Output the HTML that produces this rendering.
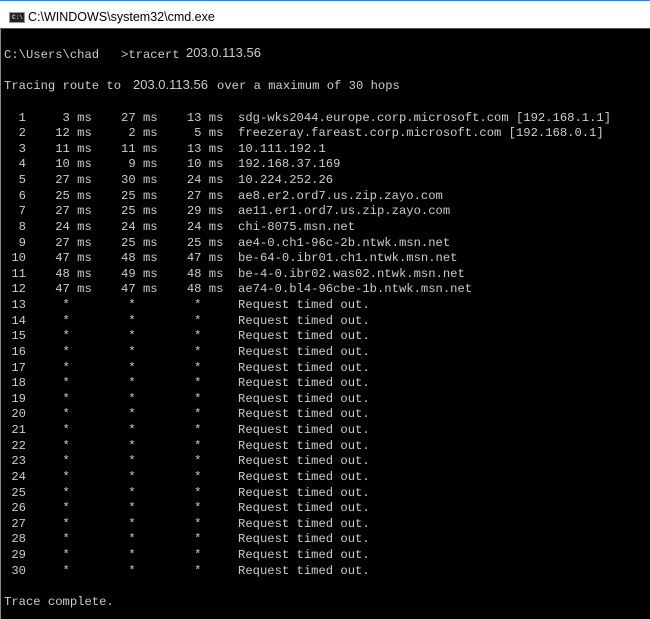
<!DOCTYPE html>
<html><head><meta charset="utf-8"><style>
html,body{margin:0;padding:0;width:650px;height:619px;overflow:hidden;background:#000;}
#title{position:absolute;left:0;top:0;width:650px;height:29px;background:#fff;border-top:1px solid #3a7bd5;box-sizing:border-box;border-bottom:1px solid #555;}
#title .t{position:absolute;left:28px;top:9px;font:12.5px "Liberation Sans",sans-serif;color:#000;}
#icon{position:absolute;left:9px;top:11px;width:16px;height:11px;background:#222;border:1px solid #999;box-sizing:border-box;}
#icon span{position:absolute;left:2px;top:1px;font:bold 6px "Liberation Mono",monospace;color:#ccc;line-height:7px;}
#con{position:absolute;left:0;top:29px;width:650px;height:590px;background:#000;border-left:1px solid #888;box-sizing:border-box;}
pre{position:absolute;left:3px;top:19px;margin:0;font:12.2px/15.62px "Liberation Mono",monospace;color:#cccccc;white-space:pre;}
.ip{position:absolute;font:13px "Liberation Sans",sans-serif;color:#cccccc;}
</style></head><body>
<div id="title"><div id="icon"><span>C:\</span></div><div class="t">C:\WINDOWS\system32\cmd.exe</div></div>
<div id="con">
<pre>C:\Users\chad   &gt;tracert

Tracing route to

  1     3 ms    27 ms    13 ms  sdg-wks2044.europe.corp.microsoft.com [192.168.1.1]
  2    12 ms     2 ms     5 ms  freezeray.fareast.corp.microsoft.com [192.168.0.1]
  3    11 ms    11 ms    13 ms  10.111.192.1
  4    10 ms     9 ms    10 ms  192.168.37.169
  5    27 ms    30 ms    24 ms  10.224.252.26
  6    25 ms    25 ms    27 ms  ae8.er2.ord7.us.zip.zayo.com
  7    27 ms    25 ms    29 ms  ae11.er1.ord7.us.zip.zayo.com
  8    24 ms    24 ms    24 ms  chi-8075.msn.net
  9    27 ms    25 ms    25 ms  ae4-0.ch1-96c-2b.ntwk.msn.net
 10    47 ms    48 ms    47 ms  be-64-0.ibr01.ch1.ntwk.msn.net
 11    48 ms    49 ms    48 ms  be-4-0.ibr02.was02.ntwk.msn.net
 12    47 ms    47 ms    48 ms  ae74-0.bl4-96cbe-1b.ntwk.msn.net
 13     *        *        *     Request timed out.
 14     *        *        *     Request timed out.
 15     *        *        *     Request timed out.
 16     *        *        *     Request timed out.
 17     *        *        *     Request timed out.
 18     *        *        *     Request timed out.
 19     *        *        *     Request timed out.
 20     *        *        *     Request timed out.
 21     *        *        *     Request timed out.
 22     *        *        *     Request timed out.
 23     *        *        *     Request timed out.
 24     *        *        *     Request timed out.
 25     *        *        *     Request timed out.
 26     *        *        *     Request timed out.
 27     *        *        *     Request timed out.
 28     *        *        *     Request timed out.
 29     *        *        *     Request timed out.
 30     *        *        *     Request timed out.

Trace complete.</pre>
<span class="ip" style="left:185px;top:16px;">203.0.113.56</span>
<span class="ip" style="left:132px;top:48px;">203.0.113.56</span>
<pre style="left:216px;top:50px;">over a maximum of 30 hops</pre>
</div>
</body></html>
